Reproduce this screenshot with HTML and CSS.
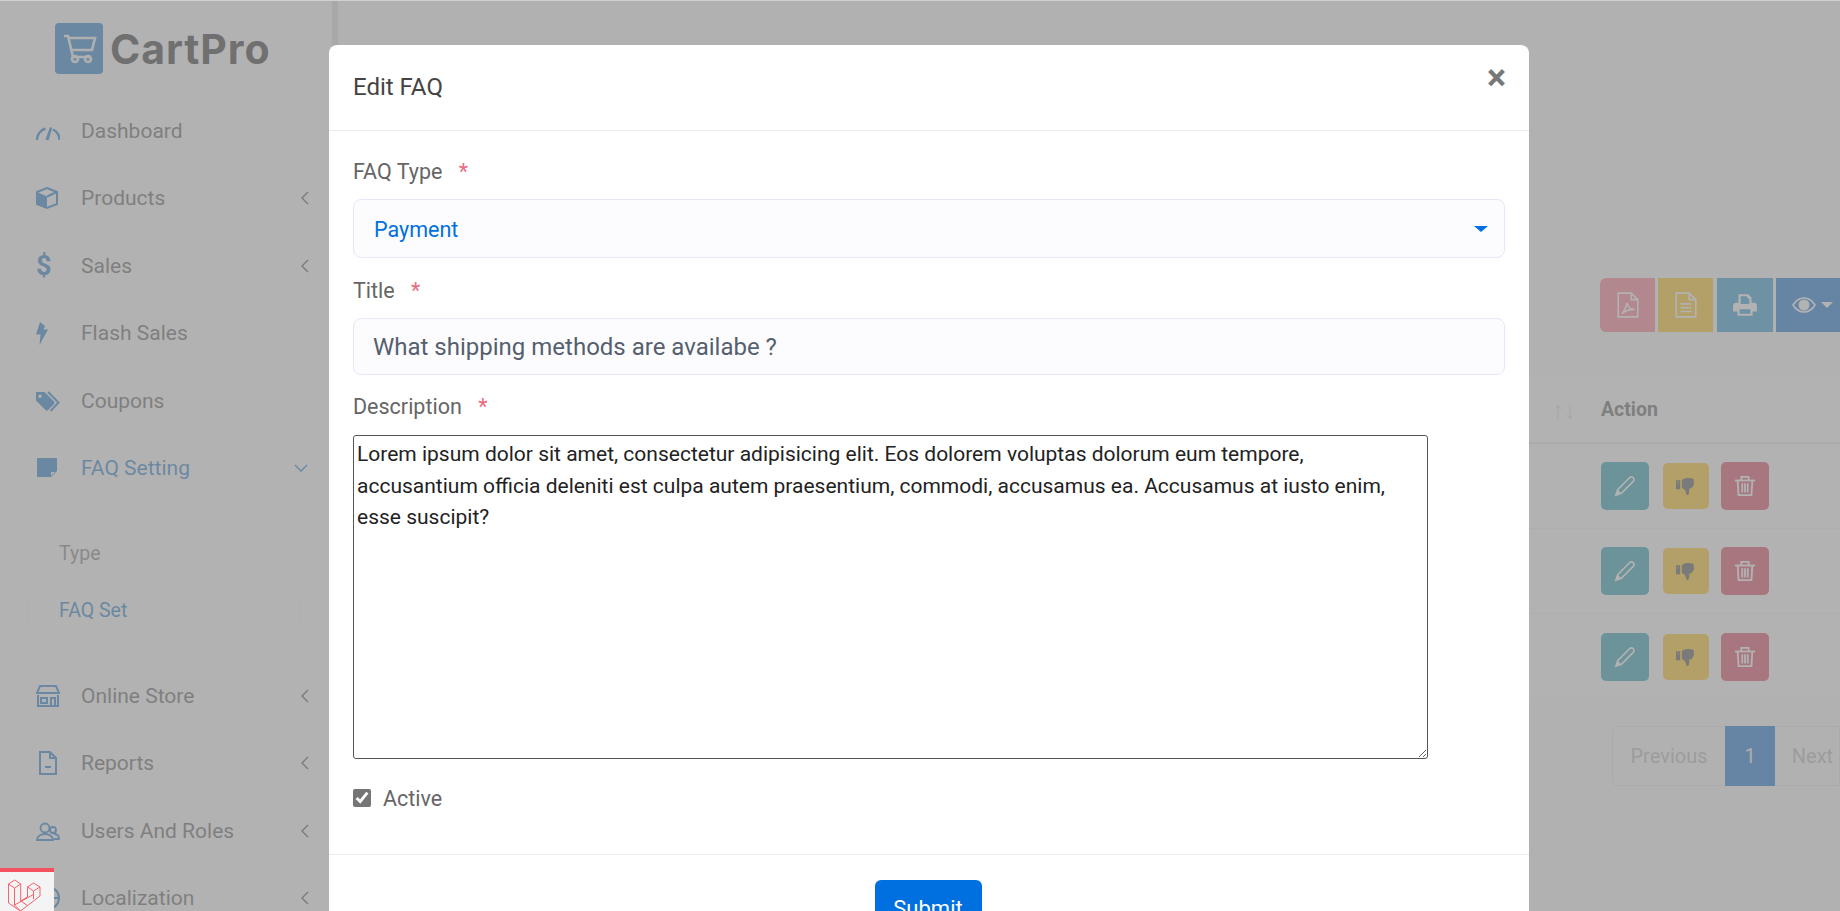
FILE: index.html
```html
<!DOCTYPE html>
<html lang="en">
<head>
    <meta charset="UTF-8">
    <meta name="viewport" content="width=device-width, initial-scale=1.0">
    <title>CartPro - FAQ Set</title>
    <link rel="stylesheet" href="styles.css">
</head>
<body>
    <div class="page">
        <aside class="sidebar">
            <div class="brand">
                <svg class="brand-icon" viewBox="0 0 48 51">
                    <rect width="48" height="51" rx="4" fill="currentColor"/>
                    <g fill="none" stroke="#f4f4f4" stroke-width="2.6">
                        <path d="M9 13h4l5 21h18"/>
                        <path d="M14 15h26l-3 12H17"/>
                        <circle cx="20" cy="36" r="3"/>
                        <circle cx="33" cy="36" r="3"/>
                    </g>
                </svg>
                <span class="brand-name">CartPro</span>
            </div>
            <ul class="menu">
                <li class="menu-item">
                    <svg class="menu-icon" viewBox="0 0 24 24"><path d="M1 21A12 12 0 0 1 9.500 9.500" fill="none" stroke="currentColor" stroke-width="2.400"/><path d="M17 10.500A12 12 0 0 1 23.500 21" fill="none" stroke="currentColor" stroke-width="2.400"/><path d="M14 8l2.200 1L12.500 21.500 9.500 20.500z" fill="currentColor"/></svg>
                    <span class="menu-label">Dashboard</span>
                </li>
                <li class="menu-item">
                    <svg class="menu-icon" viewBox="0 0 24 24"><path d="M11 2l10 4v12l-10 4-10-4V6z" fill="none" stroke="currentColor" stroke-width="2"/><path d="M1 6l10 4.500V22L1 18z" fill="currentColor"/><path d="M21 6l-10 4.500" fill="none" stroke="currentColor" stroke-width="2"/></svg>
                    <span class="menu-label">Products</span>
                    <svg class="chevron" viewBox="0 0 8 14"><path d="M7 1L1 7l6 6"/></svg>
                </li>
                <li class="menu-item">
                    <span class="menu-icon dollar">$</span>
                    <span class="menu-label">Sales</span>
                    <svg class="chevron" viewBox="0 0 8 14"><path d="M7 1L1 7l6 6"/></svg>
                </li>
                <li class="menu-item">
                    <svg class="menu-icon" viewBox="0 0 24 24"><path d="M4 1L0 13.500h4.500L3.500 24 12 8.500H7.500L9 5z" fill="currentColor"/></svg>
                    <span class="menu-label">Flash Sales</span>
                </li>
                <li class="menu-item">
                    <svg class="menu-icon" viewBox="0 0 24 24"><path fill-rule="evenodd" d="M0 3h8.500L18 12.500a2 2 0 0 1 0 2.500l-6 6a2 2 0 0 1-2.500 0L0 11.500zM4 5.500a1.700 1.700 0 1 0 .01 0z" fill="currentColor"/><path d="M12 3l10.500 10.500L14.500 22" fill="none" stroke="currentColor" stroke-width="2"/></svg>
                    <span class="menu-label">Coupons</span>
                </li>
                <li class="menu-group">
                    <div class="menu-item active">
                        <svg class="menu-icon" viewBox="0 0 24 24"><path fill-rule="evenodd" d="M1 2h20v13l-6 6H1zM15 16v4l4-4z" fill="currentColor"/></svg>
                        <span class="menu-label">FAQ Setting</span>
                        <svg class="chevron-down" viewBox="0 0 14 8"><path d="M1 1l6 6 6-6"/></svg>
                    </div>
                    <ul class="submenu">
                        <li class="submenu-item">Type</li>
                        <li class="submenu-item current">FAQ Set</li>
                    </ul>
                </li>
                <li class="menu-item">
                    <svg class="menu-icon" viewBox="0 0 24 24"><g fill="none" stroke="currentColor" stroke-width="2"><path d="M4 2h16l3 7H1z"/><path d="M1 9h22"/><path d="M2 11v11h20V11"/><path d="M5 14h6v5H5z"/><path d="M15 22v-8h4v8"/></g></svg>
                    <span class="menu-label">Online Store</span>
                    <svg class="chevron" viewBox="0 0 8 14"><path d="M7 1L1 7l6 6"/></svg>
                </li>
                <li class="menu-item">
                    <svg class="menu-icon" viewBox="0 0 24 24"><g fill="none" stroke="currentColor" stroke-width="2"><path d="M4 1h10l6 6v16H4z"/><path d="M14 1v6h6"/><path d="M9 16h6"/></g></svg>
                    <span class="menu-label">Reports</span>
                    <svg class="chevron" viewBox="0 0 8 14"><path d="M7 1L1 7l6 6"/></svg>
                </li>
                <li class="menu-item">
                    <svg class="menu-icon" viewBox="0 0 24 24"><g fill="none" stroke="currentColor" stroke-width="1.800"><circle cx="9" cy="9" r="4.500"/><circle cx="17" cy="11" r="3"/><path d="M1 21c0-4 4-6 8-6s8 2 8 6z"/><path d="M18 15c3 0 5 2 5 5h-5"/></g></svg>
                    <span class="menu-label">Users And Roles</span>
                    <svg class="chevron" viewBox="0 0 8 14"><path d="M7 1L1 7l6 6"/></svg>
                </li>
                <li class="menu-item">
                    <svg class="menu-icon" viewBox="0 0 24 24"><g fill="none" stroke="currentColor" stroke-width="2"><circle cx="12" cy="12" r="11"/><ellipse cx="12" cy="12" rx="5" ry="11"/><path d="M1 12h22"/></g></svg>
                    <span class="menu-label">Localization</span>
                    <svg class="chevron" viewBox="0 0 8 14"><path d="M7 1L1 7l6 6"/></svg>
                </li>
            </ul>
        </aside>

        <main class="content">
            <div class="toolbar">
                <button class="tool tool-pdf">
                    <svg viewBox="0 0 24 24"><g fill="none" stroke="currentColor" stroke-width="1.500"><path d="M3 1h12l6 6v16H3z"/><path d="M15 1v6h6"/><path d="M6 20c3-2 4-5 5-10 1 4 3 6 7 6-4 0-8 1-12 4z"/></g></svg>
                </button>
                <button class="tool tool-excel">
                    <svg viewBox="0 0 24 24"><g fill="none" stroke="currentColor" stroke-width="1.500"><path d="M3 1h12l6 6v16H3z"/><path d="M15 1v6h6"/><path d="M7 11h10M7 14.500h10M7 18h10"/></g></svg>
                </button>
                <button class="tool tool-print">
                    <svg viewBox="0 0 24 24"><path fill-rule="evenodd" d="M6 2h9l3 3v5h2a3 3 0 0 1 3 3v5h-4v4H5v-4H1v-5a3 3 0 0 1 3-3h2zM8 4v7h8V6h-2V4zM7 16v4h10v-4z" fill="currentColor"/></svg>
                </button>
                <button class="tool tool-eye">
                    <svg viewBox="0 0 24 24"><path d="M1 12c3-5 7-7 11-7s8 2 11 7c-3 5-7 7-11 7s-8-2-11-7z" fill="none" stroke="currentColor" stroke-width="1.600"/><circle cx="12" cy="12" r="5.500" fill="currentColor"/></svg>
                    <span class="caret"></span>
                </button>
            </div>

            <section class="table-card">
                <div class="table-head">
                    <span class="sort">↑↓</span>
                    <span class="head-action">Action</span>
                </div>
                <div class="table-row">
                    <button class="act act-edit"><svg viewBox="0 0 24 24"><path d="M2 22l2-6L17 3a2.500 2.500 0 0 1 4 4L8 20z" fill="none" stroke="currentColor" stroke-width="1.800"/><path d="M2 22l2-6 4 4z" fill="currentColor"/></svg></button>
                    <button class="act act-thumb"><svg viewBox="0 0 24 24"><path d="M0 5h5v11H0z M2 7v2h1V7z M7 5c3-3 9-3 13-2 2 1 2 3 1 4 1 2 1 4-1 5 0 2-1 3-4 3 0 4 0 7-2 8-2 0-2-4-3-6l-4-3z" fill="currentColor" fill-rule="evenodd"/></svg></button>
                    <button class="act act-delete"><svg viewBox="0 0 24 24"><g fill="none" stroke="currentColor" stroke-width="2"><path d="M1 6h22"/><path d="M8 6V2h8v4"/><path d="M4 6l1 16h14l1-16"/><path d="M9 9v10M12 9v10M15 9v10"/></g></svg></button>
                </div>
                <div class="table-row">
                    <button class="act act-edit"><svg viewBox="0 0 24 24"><path d="M2 22l2-6L17 3a2.500 2.500 0 0 1 4 4L8 20z" fill="none" stroke="currentColor" stroke-width="1.800"/><path d="M2 22l2-6 4 4z" fill="currentColor"/></svg></button>
                    <button class="act act-thumb"><svg viewBox="0 0 24 24"><path d="M0 5h5v11H0z M2 7v2h1V7z M7 5c3-3 9-3 13-2 2 1 2 3 1 4 1 2 1 4-1 5 0 2-1 3-4 3 0 4 0 7-2 8-2 0-2-4-3-6l-4-3z" fill="currentColor" fill-rule="evenodd"/></svg></button>
                    <button class="act act-delete"><svg viewBox="0 0 24 24"><g fill="none" stroke="currentColor" stroke-width="2"><path d="M1 6h22"/><path d="M8 6V2h8v4"/><path d="M4 6l1 16h14l1-16"/><path d="M9 9v10M12 9v10M15 9v10"/></g></svg></button>
                </div>
                <div class="table-row">
                    <button class="act act-edit"><svg viewBox="0 0 24 24"><path d="M2 22l2-6L17 3a2.500 2.500 0 0 1 4 4L8 20z" fill="none" stroke="currentColor" stroke-width="1.800"/><path d="M2 22l2-6 4 4z" fill="currentColor"/></svg></button>
                    <button class="act act-thumb"><svg viewBox="0 0 24 24"><path d="M0 5h5v11H0z M2 7v2h1V7z M7 5c3-3 9-3 13-2 2 1 2 3 1 4 1 2 1 4-1 5 0 2-1 3-4 3 0 4 0 7-2 8-2 0-2-4-3-6l-4-3z" fill="currentColor" fill-rule="evenodd"/></svg></button>
                    <button class="act act-delete"><svg viewBox="0 0 24 24"><g fill="none" stroke="currentColor" stroke-width="2"><path d="M1 6h22"/><path d="M8 6V2h8v4"/><path d="M4 6l1 16h14l1-16"/><path d="M9 9v10M12 9v10M15 9v10"/></g></svg></button>
                </div>
            </section>

            <nav class="pagination">
                <a class="page-link page-prev">Previous</a>
                <a class="page-link page-current">1</a>
                <a class="page-link page-next">Next</a>
            </nav>
        </main>
    </div>

    <div class="backdrop"></div>

    <div class="debugbar">
        <svg viewBox="0 0 33 33"><g fill="none" stroke="currentColor" stroke-width="0.900"><path d="M.5 5L6.700 1l6 4v17l6.800-4V8l6-4 6.500 4v9L12.500 32 .5 24z"/><path d="M.5 5l6 4 6.200-4M6.500 9v17l6 6M6.500 26l19-10.500M19.500 8l6 4 6.500-4M25.500 12v8M12.700 22l6.800 4.500"/></g></svg>
    </div>

    <div class="modal">
        <header class="modal-header">
            <h5 class="modal-title">Edit FAQ</h5>
            <span class="modal-close">×</span>
        </header>
        <form class="modal-body">
            <label class="field-label" for="faq-type">FAQ Type <span class="req">*</span></label>
            <div class="select-wrap">
                <select class="field select-field" id="faq-type">
                    <option>Payment</option>
                </select>
            </div>
            <label class="field-label" for="faq-title">Title <span class="req">*</span></label>
            <input class="field input-field" id="faq-title" type="text" value="What shipping methods are availabe ?">
            <label class="field-label" for="faq-desc">Description <span class="req">*</span></label>
            <textarea class="desc-field" id="faq-desc">Lorem ipsum dolor sit amet, consectetur adipisicing elit. Eos dolorem voluptas dolorum eum tempore, accusantium officia deleniti est culpa autem praesentium, commodi, accusamus ea. Accusamus at iusto enim, esse suscipit?</textarea>
            <label class="check-row"><input class="check-box" type="checkbox" checked> Active</label>
        </form>
        <footer class="modal-footer">
            <button class="submit-btn" type="button">Submit</button>
        </footer>
    </div>
</body>
</html>
```

FILE: styles.css
```css
* {
    box-sizing: border-box;
}
html, body {
    height: 100%;
}
body {
    margin: 0;
    overflow: hidden;
    font-family: Roboto, "Liberation Sans", sans-serif;
    font-size: 21px;
    color: #333;
    background-color: #fff;
}
ul {
    list-style: none;
    margin: 0;
    padding: 0;
}
button {
    border: 0;
    padding: 0;
    font-family: inherit;
}

.page {
    display: flex;
    height: 100%;
}

/* sidebar */
.sidebar {
    width: 338px;
    flex-shrink: 0;
    border-right: 6px solid #dcdcdc;
    background-color: #fff;
}
.brand {
    display: flex;
    align-items: center;
    gap: 7px;
    height: 97px;
    padding: 0 0 1px 55px;
}
.brand-icon {
    width: 48px;
    height: 51px;
    color: #0f72c8;
}
.brand-name {
    margin-top: 1px;
    font-family: Inter, sans-serif;
    font-size: 41px;
    font-weight: 700;
    letter-spacing: 0.9px;
    color: #222;
}
.menu-item {
    display: flex;
    align-items: center;
    height: 67.5px;
    padding-left: 36px;
    color: #555;
}
.menu-icon {
    width: 24px;
    height: 24px;
    margin-right: 21px;
    flex-shrink: 0;
    color: #0f72c8;
}
.dollar {
    font-size: 27px;
    font-weight: 700;
    line-height: 24px;
}
.menu-label {
    flex: 1;
}
.chevron {
    width: 8px;
    height: 14px;
    margin-right: 23px;
    fill: none;
    stroke: #444;
    stroke-width: 1.4;
}
.chevron-down {
    width: 14px;
    height: 8px;
    margin-right: 20px;
    fill: none;
    stroke: #0f72c8;
    stroke-width: 1.4;
}
.menu-group {
    margin: 0 4px 0 6px;
    box-shadow: 0 0 24px rgba(0, 0, 0, 0.015);
    border-radius: 12px;
}
.menu-group .menu-item {
    padding-left: 30px;
}
.menu-item.active .menu-label {
    color: #0f72c8;
}
.submenu {
    padding: 23px 30px 23px 24px;
}
.submenu-item {
    display: flex;
    align-items: center;
    height: 57px;
    padding-left: 29px;
    font-size: 19.5px;
    color: #777;
    border-radius: 12px;
}
.submenu-item.current {
    color: #0f72c8;
    box-shadow: 0 0 20px rgba(0, 0, 0, 0.03);
}

/* page behind the modal */
.content {
    flex: 1;
    min-width: 0;
    padding-top: 278px;
    background-color: #fafbfd;
}
.toolbar {
    display: flex;
    justify-content: flex-end;
    gap: 3px;
    height: 54px;
}
.tool {
    display: flex;
    align-items: center;
    justify-content: center;
    width: 55px;
    color: #fff;
}
.tool svg {
    width: 26px;
    height: 26px;
}
.tool-pdf {
    background-color: #ff6e85;
    border-radius: 6px 0 0 6px;
}
.tool-excel {
    margin-right: 1px;
    background-color: #ffc107;
}
.tool-print {
    width: 56px;
    background-color: #2090d0;
}
.tool-eye {
    width: 64px;
    gap: 5px;
    padding-left: 8px;
    background-color: #0068d0;
}
.tool-eye svg {
    width: 24px;
    height: 24px;
}
.caret {
    border-left: 6px solid transparent;
    border-right: 6px solid transparent;
    border-top: 6px solid currentColor;
}
.table-card {
    margin-top: 45px;
    height: 321px;
    background-color: #fff;
}
.table-head {
    display: flex;
    align-items: center;
    justify-content: flex-end;
    height: 67px;
    border-bottom: 2px solid #e8e8e8;
}
.sort {
    margin-right: 25px;
    font-size: 24px;
    color: #d8d8d8;
}
.head-action {
    width: 239px;
    font-weight: 700;
    font-size: 19.500px;
    color: #555;
}
.table-row {
    display: flex;
    align-items: center;
    gap: 12px;
    height: 85px;
    padding-left: 1263px;
    border-bottom: 1px solid #f2f2f2;
}
.table-row:last-child {
    border-bottom: 0;
}
.act {
    display: flex;
    align-items: center;
    justify-content: center;
    flex-shrink: 0;
    width: 48px;
    height: 48px;
    border-radius: 5px;
    color: #fff;
}
.act svg {
    width: 22px;
    height: 22px;
}
.act-edit {
    background-color: #1498ac;
}
.act-thumb {
    width: 46px;
    height: 46px;
    margin-left: 2px;
    background-color: #ffc107;
    color: #444;
}
.act-thumb svg {
    width: 20px;
    height: 20px;
}
.act-delete {
    background-color: #dc3650;
}
.pagination {
    display: flex;
    justify-content: flex-end;
    height: 60px;
    margin-top: 28px;
}
.page-link {
    display: flex;
    align-items: center;
    justify-content: center;
    border: 1px solid #e8e8e8;
    font-size: 20px;
    color: #b4b4b4;
    background-color: #fbfcfc;
}
.page-prev {
    width: 113px;
    border-radius: 6px 0 0 6px;
    border-right: 0;
}
.page-current {
    width: 50px;
    border: 0;
    color: #eee;
    background-color: #0068d0;
}
.page-next {
    width: 65px;
    padding-left: 11px;
    border-left: 0;
}

/* overlays */
.backdrop {
    position: absolute;
    inset: 0;
    border-top: 1px solid #d0d0d0;
    background-color: rgba(146, 146, 146, 0.7);
}
.debugbar {
    position: absolute;
    left: 0;
    bottom: 0;
    width: 54px;
    height: 43px;
    padding: 7px 0 0 8px;
    border-top: 4px solid #f4515f;
    background-color: #f4f4f4;
    color: #f4515f;
}
.debugbar svg {
    display: block;
    width: 33px;
    height: 33px;
}

.modal {
    position: absolute;
    left: 329px;
    top: 45px;
    width: 1200px;
    height: 900px;
    background-color: #fff;
    border-radius: 8px;
}
.modal-header {
    position: relative;
    height: 86px;
    padding: 28px 24px 0;
    border-bottom: 1px solid #e9ecef;
}
.modal-title {
    margin: 0;
    font-size: 24px;
    font-weight: 400;
    line-height: 28px;
    color: #444;
}
.modal-close {
    position: absolute;
    right: 23px;
    top: 11px;
    font-size: 36px;
    font-weight: 700;
    line-height: 44px;
    color: #777;
}
.modal-body {
    padding: 25px 24px 0;
}
.field-label {
    display: block;
    height: 43px;
    padding-top: 3px;
    font-size: 21.500px;
    line-height: 26px;
    color: #666;
}
.req {
    margin-left: 11px;
    color: #ec6b7e;
}
.select-wrap {
    position: relative;
}
.select-wrap::after {
    content: "";
    position: absolute;
    right: 17px;
    top: 27px;
    border-left: 7px solid transparent;
    border-right: 7px solid transparent;
    border-top: 6px solid #0070e0;
}
.field {
    display: block;
    width: 100%;
    border: 1px solid #e6e6fb;
    border-radius: 8px;
    background-color: #fcfcff;
    font-family: inherit;
    outline: 0;
}
.select-field {
    height: 59px;
    padding: 2px 20px 0;
    appearance: none;
    font-size: 21.500px;
    color: #0070e0;
    margin-bottom: 17px;
}
.input-field {
    height: 57px;
    padding: 0 19px;
    font-size: 24px;
    color: #555f6d;
    margin-bottom: 16px;
}
.desc-field {
    display: block;
    width: 1075px;
    height: 324px;
    margin-top: 1px;
    padding: 3px;
    border: 1px solid #555;
    border-radius: 3px;
    font-family: inherit;
    font-size: 21px;
    line-height: 31.500px;
    color: #222;
    background-color: #fff;
    outline: 0;
}
.check-row {
    display: flex;
    align-items: center;
    gap: 12px;
    margin-top: 27px;
    height: 24px;
    font-size: 21.500px;
    color: #666;
}
.check-box {
    width: 18px;
    height: 18px;
    margin: 0;
    accent-color: #757575;
}
.modal-footer {
    display: flex;
    justify-content: center;
    margin-top: 44px;
    padding-top: 25px;
    border-top: 1px solid #e9ecef;
}
.submit-btn {
    width: 107px;
    height: 56px;
    margin-right: 2px;
    border-radius: 6px;
    font-size: 22px;
    color: #fff;
    background-color: #0070e0;
}
```
